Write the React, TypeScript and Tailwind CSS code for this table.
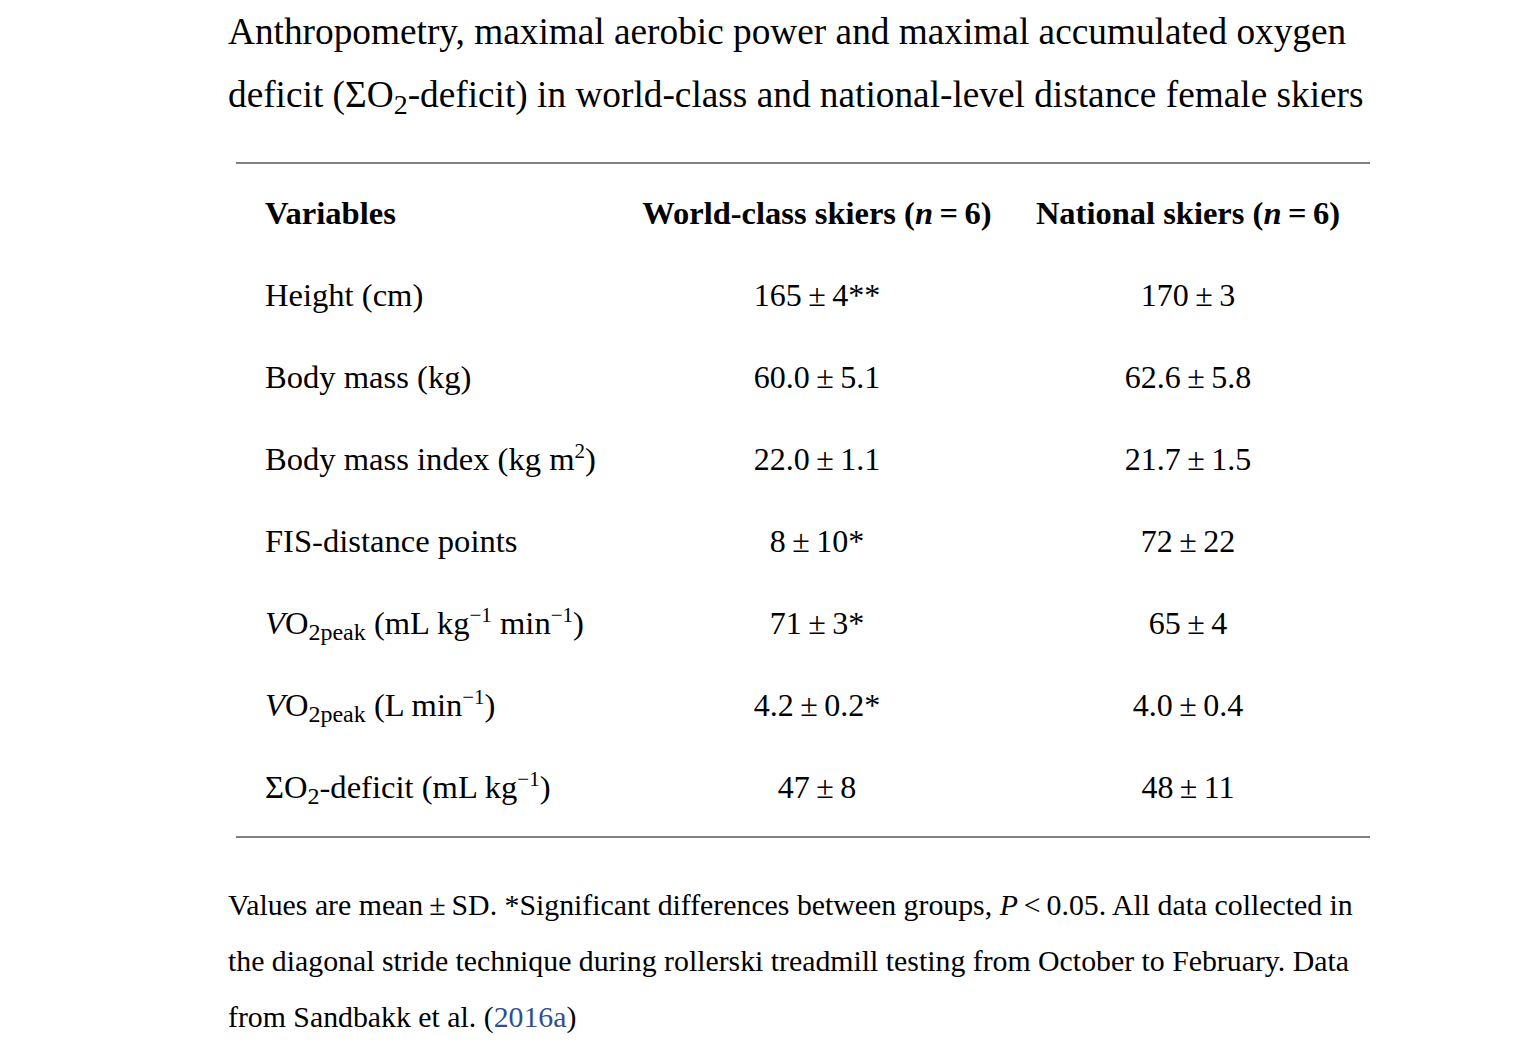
import React from 'react';

const ts = '\u2009';

const Val = ({ children }: { children: React.ReactNode }) => (
  <div className="flex h-[82px] items-center justify-center">{children}</div>
);

const Label = ({ children }: { children: React.ReactNode }) => (
  <div className="flex h-[82px] items-center pl-[29px] whitespace-nowrap text-[32.6px]">{children}</div>
);

const Sup = ({ children }: { children: React.ReactNode }) => (
  <sup className="text-[21px] -top-[12px]">{children}</sup>
);

const Sub = ({ children }: { children: React.ReactNode }) => (
  <sub className="text-[24px]">{children}</sub>
);

const rows: { label: React.ReactNode; world: string; national: string }[] = [
  { label: 'Height (cm)', world: `165${ts}±${ts}4**`, national: `170${ts}±${ts}3` },
  { label: 'Body mass (kg)', world: `60.0${ts}±${ts}5.1`, national: `62.6${ts}±${ts}5.8` },
  {
    label: (
      <>
        Body mass index (kg m<Sup>2</Sup>)
      </>
    ),
    world: `22.0${ts}±${ts}1.1`,
    national: `21.7${ts}±${ts}1.5`,
  },
  { label: 'FIS-distance points', world: `8${ts}±${ts}10*`, national: `72${ts}±${ts}22` },
  {
    label: (
      <>
        <i>V</i>O<Sub>2peak</Sub> (mL kg<Sup>−1</Sup> min<Sup>−1</Sup>)
      </>
    ),
    world: `71${ts}±${ts}3*`,
    national: `65${ts}±${ts}4`,
  },
  {
    label: (
      <>
        <i>V</i>O<Sub>2peak</Sub> (L min<Sup>−1</Sup>)
      </>
    ),
    world: `4.2${ts}±${ts}0.2*`,
    national: `4.0${ts}±${ts}0.4`,
  },
  {
    label: (
      <>
        ΣO<Sub>2</Sub>-deficit (mL kg<Sup>−1</Sup>)
      </>
    ),
    world: `47${ts}±${ts}8`,
    national: `48${ts}±${ts}11`,
  },
];

export default function App() {
  return (
    <div className="min-h-screen bg-white text-black font-['Liberation_Serif','Times_New_Roman',serif]">
      <div className="ml-[228px] w-[1142px]">
        {/* Title */}
        <h1 className="text-[37.3px] leading-[63px] whitespace-nowrap">
          Anthropometry, maximal aerobic power and maximal accumulated oxygen
          <br />
          deficit (ΣO<sub className="text-[28px]">2</sub>-deficit) in world-class and national-level distance female skiers
        </h1>

        {/* Table */}
        <div className="mt-[36px] ml-[8px] w-[1134px]">
          <div className="h-[2px] bg-[#808080]" />
          <div className="grid grid-cols-[386px_390px_352px] pt-[8px] pb-[8px] text-[32px]">
            <Label>
              <b>Variables</b>
            </Label>
            <Val>
              <b className="whitespace-nowrap text-[32.5px]">
                World-class skiers (<i>n</i>
                {ts}={ts}6)
              </b>
            </Val>
            <Val>
              <b className="whitespace-nowrap text-[32.5px]">
                National skiers (<i>n</i>
                {ts}={ts}6)
              </b>
            </Val>
            {rows.map((r, i) => (
              <React.Fragment key={i}>
                <Label>
                  <span>{r.label}</span>
                </Label>
                <Val>{r.world}</Val>
                <Val>{r.national}</Val>
              </React.Fragment>
            ))}
          </div>
          <div className="h-[2px] bg-[#808080]" />
        </div>

        {/* Footnote */}
        <p className="mt-[39px] text-[29.8px] leading-[56px] whitespace-nowrap">
          Values are mean{ts}±{ts}SD. *Significant differences between groups, <i>P</i>
          {ts}&lt;{ts}0.05. All data collected in
          <br />
          the diagonal stride technique during rollerski treadmill testing from October to February. Data
          <br />
          from Sandbakk et al. (<span className="text-[#2f4f8f]">2016a</span>)
        </p>
      </div>
    </div>
  );
}
